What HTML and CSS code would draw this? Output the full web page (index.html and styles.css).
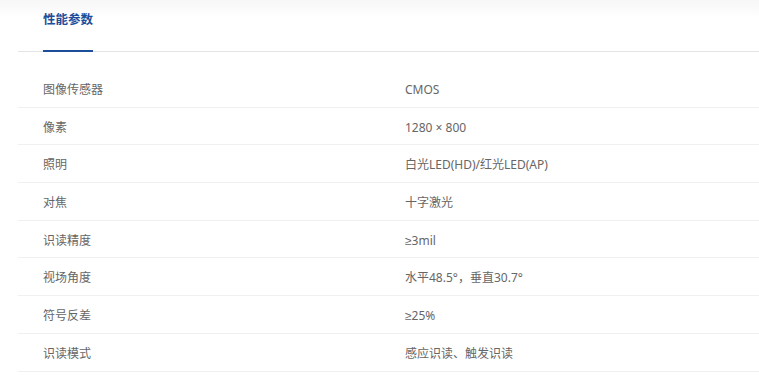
FILE: index.html
```html
<!DOCTYPE html>
<html lang="zh-CN">
<head>
<meta charset="utf-8">
<link rel="stylesheet" href="styles.css">
</head>
<body>
<div class="page">
  <div class="tabs">
    <div class="tab active">性能参数</div>
  </div>
  <div class="table">
    <div class="row"><div class="k">图像传感器</div><div class="v">CMOS</div></div>
    <div class="row"><div class="k">像素</div><div class="v">1280 × 800</div></div>
    <div class="row"><div class="k">照明</div><div class="v">白光LED(HD)/红光LED(AP)</div></div>
    <div class="row"><div class="k">对焦</div><div class="v">十字激光</div></div>
    <div class="row"><div class="k">识读精度</div><div class="v">≥3mil</div></div>
    <div class="row"><div class="k">视场角度</div><div class="v">水平48.5°，垂直30.7°</div></div>
    <div class="row"><div class="k">符号反差</div><div class="v">≥25%</div></div>
    <div class="row"><div class="k">识读模式</div><div class="v">感应识读、触发识读</div></div>
  </div>
</div>
</body>
</html>
```
FILE: styles.css
```css
html, body {
  margin: 0;
  padding: 0;
  background: #fff;
}
body {
  font-family: "Noto Sans", "Liberation Sans", "Noto Sans CJK SC", sans-serif;
  background: linear-gradient(#f7f7f7 0, #fbfbfb 10px, #fff 18px) no-repeat;
  background-size: 100% 18px;
}
.page {
  padding-left: 18px;
}
.tabs {
  display: flex;
  height: 51px;
  border-bottom: 1px solid #e4e4e4;
  padding-left: 25px;
}
.tab {
  font-family: "Noto Sans CJK SC", sans-serif;
  font-size: 12.5px;
  font-weight: bold;
  color: #1d4e9a;
  line-height: 14px;
  padding-top: 12px;
  width: 50px;
  box-sizing: border-box;
  white-space: nowrap;
}
.tab.active {
  border-bottom: 2px solid #1d4e9a;
  margin-bottom: -1px;
}
.table {
  margin-top: 18px;
}
.row {
  display: grid;
  grid-template-columns: 362px 1fr;
  height: 37.7px;
  box-sizing: border-box;
  border-bottom: 1px solid #f0f0f0;
  align-items: center;
  font-size: 12px;
  color: #666;
}
.k, .v {
  padding-left: 25px;
  padding-top: 3px;
  line-height: 16px;
}
```
